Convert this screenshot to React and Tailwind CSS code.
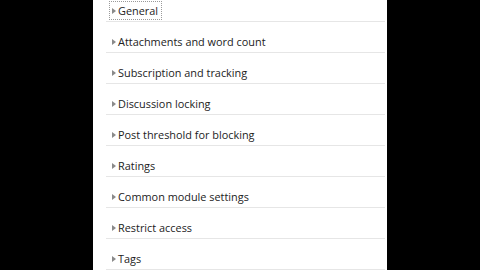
import React from "react";

const items = [
  "General",
  "Attachments and word count",
  "Subscription and tracking",
  "Discussion locking",
  "Post threshold for blocking",
  "Ratings",
  "Common module settings",
  "Restrict access",
  "Tags",
];

function Caret() {
  return (
    <svg width="4" height="6" viewBox="0 0 4 6" className="shrink-0">
      <path d="M0 0 L4 3 L0 6 Z" fill="#8a8a8a" />
    </svg>
  );
}

export default function App() {
  return (
    <div
      className="flex w-[480px] h-[270px] overflow-hidden bg-black"
      style={{ fontFamily: '"Open Sans", "Liberation Sans", sans-serif' }}
    >
      <div className="w-[93px] shrink-0 bg-black" />
      <div className="w-[294px] shrink-0 bg-white pl-[13px] pr-[2px] overflow-hidden">
        <div className="-mt-[9px] flex flex-col">
          {items.map((t, i) => (
            <div
              key={t}
              className="h-[31px] border-b border-[#e6e6e6] flex items-start pt-[11px] pl-[4px]"
            >
              <div
                className={
                  "flex items-center gap-[2px] h-[17px] pl-[2px] pr-[3px] " +
                  (i === 0 ? "outline outline-1 outline-dotted outline-[#9a9a9a]" : "")
                }
              >
                <Caret />
                <span className="text-[10.9px] leading-[17px] text-[#222]">{t}</span>
              </div>
            </div>
          ))}
        </div>
      </div>
      <div className="flex-1 bg-black" />
    </div>
  );
}
